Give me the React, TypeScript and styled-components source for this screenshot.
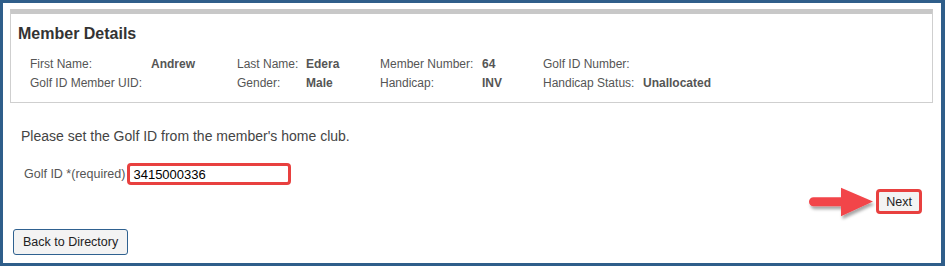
import * as React from 'react';
import styled, { createGlobalStyle } from 'styled-components';

const GlobalStyle = createGlobalStyle`
    html, body {
        margin: 0;
        padding: 0;
        background: #ffffff;
    }
`;

const Frame = styled.div`
    width: 945px;
    height: 266px;
    box-sizing: border-box;
    border: 3px solid #2f5e8a;
    border-right-width: 4px;
    padding: 6px 8px 0 7px;
    background: #ffffff;
    font-family: "Liberation Sans", Arial, sans-serif;
    display: flex;
    flex-direction: column;
`;

const Panel = styled.section`
    border: 1px solid #cfcfcf;
    border-top: 5px solid #c8c8c8;
    padding: 11px 7px 10px 7px;
`;

const PanelTitle = styled.h2`
    margin: 0;
    font-size: 16px;
    line-height: 18px;
    font-weight: bold;
    color: #333333;
`;

const DetailsGrid = styled.div`
    margin: 11px 0 0 12px;
    display: grid;
    grid-template-columns: 121px 86px 69px 74px 102px 61px 100px auto;
    grid-auto-rows: 19px;
    align-items: center;
    font-size: 12px;
    color: #555555;
`;

const Label = styled.span`
    white-space: nowrap;
`;

const Value = styled.span`
    font-weight: bold;
    white-space: nowrap;
`;

const Intro = styled.p`
    margin: 25px 0 0 11px;
    font-size: 14px;
    line-height: 16px;
    color: #444444;
`;

const FieldRow = styled.div`
    margin: 19px 0 0 14px;
    display: flex;
    align-items: center;
    gap: 2px;
`;

const FieldLabel = styled.label`
    font-size: 12.5px;
    color: #555555;
`;

const TextInput = styled.input`
    box-sizing: border-box;
    width: 164px;
    height: 22px;
    border: 3px solid #e8403f;
    border-radius: 4px;
    padding: 0 3px;
    font-family: "Liberation Sans", Arial, sans-serif;
    font-size: 13px;
    color: #000000;
    background: #ffffff;
    outline: none;
`;

const ActionRow = styled.div`
    margin: 4px 11px 0 0;
    display: flex;
    justify-content: flex-end;
    align-items: center;
    height: 25px;
`;

const Button = styled.button<{ $highlight?: boolean }>`
    box-sizing: border-box;
    height: ${p => (p.$highlight ? '25px' : '26px')};
    padding: ${p => (p.$highlight ? '0 7px' : '0 9px')};
    border: ${p => (p.$highlight ? '3px solid #e8403f' : '1px solid #2f6190')};
    border-radius: ${p => (p.$highlight ? '4px' : '3px')};
    background: #f3f3f3;
    font-family: "Liberation Sans", Arial, sans-serif;
    font-size: 12.5px;
    color: #222222;
    cursor: pointer;
`;

const BackRow = styled.div`
    margin: 15px 0 0 3px;
    display: flex;
`;

const Arrow = styled.svg`
    display: block;
    flex-shrink: 0;
    overflow: visible;
`;

const details: [string, string][] = [
    ['First Name:', 'Andrew'],
    ['Last Name:', 'Edera'],
    ['Member Number:', '64'],
    ['Golf ID Number:', ''],
    ['Golf ID Member UID:', ''],
    ['Gender:', 'Male'],
    ['Handicap:', 'INV'],
    ['Handicap Status:', 'Unallocated']
];

const PointerArrow = () => (
    <Arrow width={68} height={36} viewBox="0 0 68 36">
        <defs>
            <filter id="arrowShadow" x="-20%" y="-30%" width="150%" height="170%">
                <feDropShadow dx="1.5" dy="3" stdDeviation="1.8" floodColor="#000" floodOpacity="0.35" />
            </filter>
        </defs>
        <path
            d="M5.5 13.2 L33 13.2 L33 3.8 L65 17.6 L33 32.2 L33 22.2 L5.5 22.2 A4.5 4.5 0 0 1 5.5 13.2 Z"
            fill="#f2444a"
            filter="url(#arrowShadow)"
        />
    </Arrow>
);

export default function App() {
    return (
        <>
            <GlobalStyle />
            <Frame>
                <Panel>
                    <PanelTitle>Member Details</PanelTitle>
                    <DetailsGrid>
                        {details.map(([label, value]) => (
                            <React.Fragment key={label}>
                                <Label>{label}</Label>
                                <Value>{value}</Value>
                            </React.Fragment>
                        ))}
                    </DetailsGrid>
                </Panel>
                <Intro>Please set the Golf ID from the member's home club.</Intro>
                <FieldRow>
                    <FieldLabel htmlFor="golfId">Golf ID *(required)</FieldLabel>
                    <TextInput id="golfId" defaultValue="3415000336" />
                </FieldRow>
                <ActionRow>
                    <PointerArrow />
                    <Button $highlight>Next</Button>
                </ActionRow>
                <BackRow>
                    <Button>Back to Directory</Button>
                </BackRow>
            </Frame>
        </>
    );
}
